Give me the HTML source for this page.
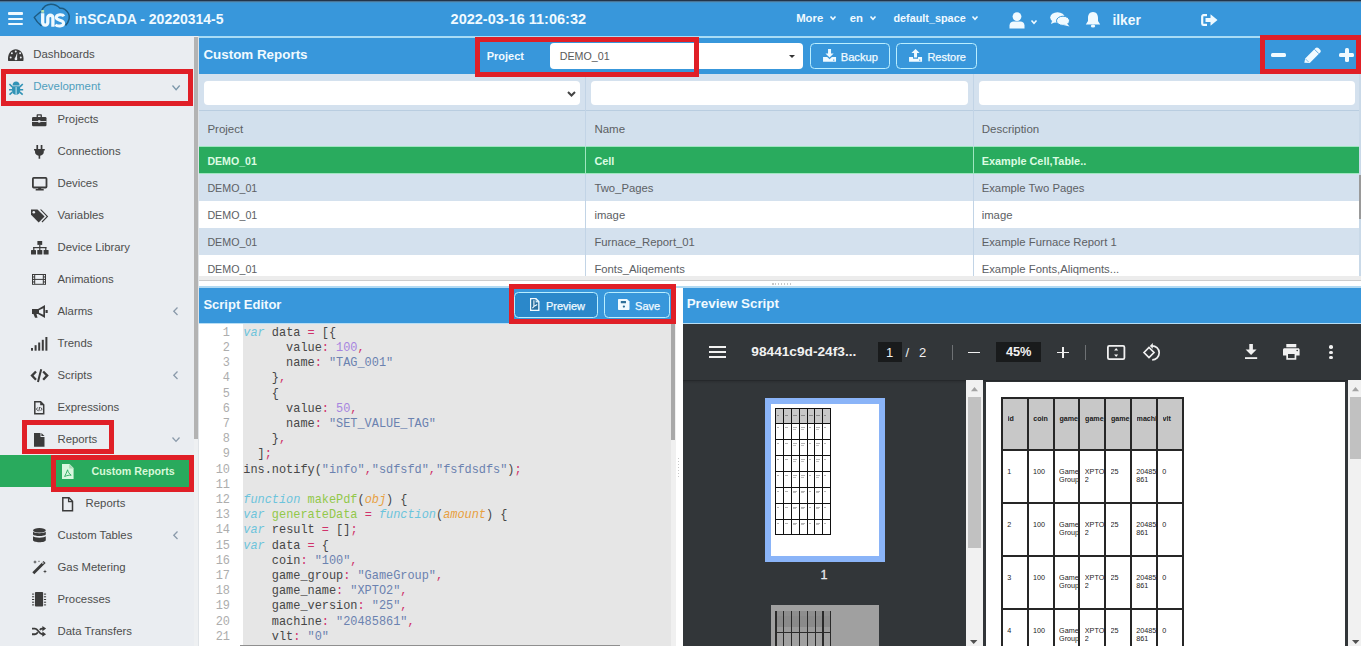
<!DOCTYPE html>
<html><head><meta charset="utf-8">
<style>
*{margin:0;padding:0;box-sizing:border-box}
html,body{width:1361px;height:646px;overflow:hidden;background:#fff}
body{font-family:"Liberation Sans",sans-serif;position:relative}
.a{position:absolute}
.t{position:absolute;white-space:nowrap;line-height:1}
.rb{position:absolute;border:5px solid #e01f27}
svg{position:absolute;overflow:visible}
.cm{font-family:"Liberation Mono",monospace;font-size:11.9px;line-height:15.2px;white-space:pre;position:absolute;color:#474747}
.k{color:#6cc4dc;font-style:italic}
.p{color:#d0336b}
.n{color:#a685e0}
.s{color:#6b82b0}
.f{color:#92c84a}
.o{color:#e8a040;font-style:italic}
</style></head><body>
<div class="a" style="left:0px;top:0px;width:1361px;height:36px;background:#3897db;"></div><div class="a" style="left:0px;top:0px;width:1361px;height:1.2px;background:#22344a;"></div><div class="a" style="left:0px;top:1.2px;width:1361px;height:1px;background:#4a7496;"></div><div class="a" style="left:0px;top:2.2px;width:1361px;height:1.2px;background:#4592c6;"></div><div class="a" style="left:8px;top:12px;width:15px;height:2.8px;background:#f0faff;border-radius:1px"></div><div class="a" style="left:8px;top:17.5px;width:15px;height:2.8px;background:#f0faff;border-radius:1px"></div><div class="a" style="left:8px;top:22.6px;width:15px;height:2.8px;background:#f0faff;border-radius:1px"></div><svg style="left:0px;top:0px" width="80" height="36" viewBox="0 0 80 36">
<path d="M41.5 11 C43.5 6.5 47 4.2 51 4.2 C55 4.2 58 6 60 8.2 C63 7.8 66.5 10 68.5 13.5 C70.5 17.5 68.5 22 65.5 25.5" fill="none" stroke="#1d5a80" stroke-width="1.5"/>
<path d="M41 11.5 C38.5 13.5 35.5 16 34.3 17.5 C35.5 19.8 38.5 23.5 41.5 25.8" fill="none" stroke="#1d5a80" stroke-width="1.5"/>
<path d="M42.7 13.2 V22.6 A2.55 2.55 0 0 0 47.8 22.6 V17.8 A2.55 2.55 0 0 1 52.9 17.8 V26.8" fill="none" stroke="#f0faff" stroke-width="3.3"/>
<path d="M64 16.2 C62.8 14.3 56.3 14 56.3 17.6 C56.3 21 63.6 19.5 63.6 23.3 C63.6 26.8 57 26.6 55.5 24.6" fill="none" stroke="#f0faff" stroke-width="3"/>
<rect x="41.3" y="10" width="2.8" height="2.6" fill="#b5e0b0"/>
</svg><div class="t" style="left:74.7px;top:11.70px;font-size:14px;color:#f0faff;font-weight:bold;">inSCADA - 20220314-5</div><div class="t" style="left:450.6px;top:11.62px;font-size:14.5px;color:#f0faff;font-weight:bold;">2022-03-16 11:06:32</div><div class="t" style="left:796.2px;top:12.50px;font-size:11.3px;color:#f0faff;font-weight:bold;">More</div><div class="t" style="left:849.8px;top:12.50px;font-size:11.3px;color:#f0faff;font-weight:bold;">en</div><div class="t" style="left:893.4px;top:12.57px;font-size:10.85px;color:#f0faff;font-weight:bold;">default_space</div><svg style="left:829.5px;top:15.5px" width="6" height="3.5"><polyline points="0.5,0.5 3.0,3.2 5.5,0.5" fill="none" stroke="#f0faff" stroke-width="1.6"/></svg><svg style="left:869.7px;top:15.5px" width="6" height="3.5"><polyline points="0.5,0.5 3.0,3.2 5.5,0.5" fill="none" stroke="#f0faff" stroke-width="1.6"/></svg><svg style="left:971.5px;top:15.5px" width="6" height="3.5"><polyline points="0.5,0.5 3.0,3.2 5.5,0.5" fill="none" stroke="#f0faff" stroke-width="1.6"/></svg><svg style="left:1008.5px;top:11.5px" width="16" height="17" viewBox="0 0 16 17">
<circle cx="8" cy="4.6" r="4.4" fill="#f0faff"/>
<path d="M0.5 16.5 L0.5 13.5 C0.5 11 2.5 9.5 4.5 9.5 L11.5 9.5 C13.5 9.5 15.5 11 15.5 13.5 L15.5 16.5 Z" fill="#f0faff"/>
</svg><svg style="left:1030.5px;top:19.5px" width="6" height="3.5"><polyline points="0.5,0.5 3.0,3.2 5.5,0.5" fill="none" stroke="#f0faff" stroke-width="1.6"/></svg><svg style="left:1050px;top:12px" width="20" height="15" viewBox="0 0 20 15">
<ellipse cx="7.5" cy="5.5" rx="7.3" ry="5.2" fill="#f0faff"/>
<path d="M2 9 L1 12 L5.5 10 Z" fill="#f0faff"/>
<ellipse cx="13" cy="8.8" rx="6.5" ry="4.6" fill="#f0faff" stroke="#3897db" stroke-width="1"/>
<path d="M17 11.5 L19.5 14.5 L13.5 13 Z" fill="#f0faff"/>
</svg><svg style="left:1084.5px;top:11px" width="16" height="17" viewBox="0 0 16 17">
<path d="M8 1 C4.5 1 3 3.8 3 7 L3 10 L0.8 13.5 L15.2 13.5 L13 10 L13 7 C13 3.8 11.5 1 8 1 Z" fill="#f0faff"/>
<ellipse cx="8" cy="15" rx="2.2" ry="1.6" fill="#f0faff"/>
</svg><div class="t" style="left:1112.4px;top:13.53px;font-size:13.8px;color:#f0faff;font-weight:bold;">ilker</div><svg style="left:1200.5px;top:13.5px" width="17" height="12" viewBox="0 0 17 12">
<path d="M6 1.2 L2.5 1.2 C1.6 1.2 1.2 1.8 1.2 2.6 L1.2 9.4 C1.2 10.2 1.6 10.8 2.5 10.8 L6 10.8" fill="none" stroke="#f0faff" stroke-width="2.2"/>
<path d="M4.5 4 L9.5 4 L9.5 0.3 L16.5 6 L9.5 11.7 L9.5 8 L4.5 8 Z" fill="#f0faff"/>
</svg><div class="a" style="left:0px;top:36px;width:194px;height:610px;background:#eaedf1;"></div><div class="a" style="left:194px;top:36px;width:5px;height:610px;background:#eef0f2;"></div><div class="a" style="left:198px;top:36px;width:1px;height:610px;background:#dfe3e7;"></div><div class="a" style="left:194px;top:37px;width:4px;height:402px;background:#b3b3b3;"></div><svg style="left:7.8px;top:48.6px" width="15.5" height="12.2" viewBox="0 0 16 12.5"><path d="M0.2 12.3 C0 11.5 0 10.5 0 9.5 C0 4.2 3.6 0.2 8 0.2 C12.4 0.2 16 4.2 16 9.5 C16 10.5 16 11.5 15.8 12.3 Z" fill="#3b3b3b"/><circle cx="2.8" cy="8.8" r="1" fill="#eceff3"/><circle cx="4" cy="4.3" r="1" fill="#eceff3"/><circle cx="8" cy="2.6" r="1" fill="#eceff3"/><circle cx="12.5" cy="4.3" r="1" fill="#eceff3"/><circle cx="13.2" cy="8.8" r="1" fill="#eceff3"/><path d="M7 10.2 L9.6 3.5 L9.3 10.4 Z" fill="#eceff3"/><circle cx="8.2" cy="10.2" r="1.4" fill="#eceff3"/></svg><div class="t" style="left:33.3px;top:48.69px;font-size:11.4px;color:#4d4d4d;font-weight:normal;">Dashboards</div><svg style="left:8.6px;top:80.8px" width="14.2" height="14.2" viewBox="0 0 14 14"><path d="M3.5 4.5 C3.5 2 5 0.6 7 0.6 C9 0.6 10.5 2 10.5 4.5 Z" fill="#3193b6"/><path d="M3 5.3 L11 5.3 L11 9.5 C11 12 9.2 13.6 7 13.6 C4.8 13.6 3 12 3 9.5 Z" fill="#3193b6"/><path d="M7 6 L7 13.4" stroke="#dff3fb" stroke-width="0.9"/><path d="M0.4 3 L3.2 5.8 M13.6 3 L10.8 5.8 M0 8.6 L3.2 8.6 M14 8.6 L10.8 8.6 M0.5 13.5 L3.3 11 M13.5 13.5 L10.7 11" stroke="#3193b6" stroke-width="1.6"/></svg><div class="t" style="left:33.3px;top:81.39px;font-size:11.4px;color:#509fbd;font-weight:normal;">Development</div><svg style="left:171.5px;top:84.8px" width="8.2" height="5"><polyline points="0.5,0.5 4.1,4.7 7.699999999999999,0.5" fill="none" stroke="#7b97aa" stroke-width="1.3"/></svg><svg style="left:32px;top:113.8px" width="14.5" height="12.2" viewBox="0 0 14.5 12.2"><path d="M4.6 3 L4.6 1.2 C4.6 0.5 5 0.2 5.6 0.2 L8.9 0.2 C9.5 0.2 9.9 0.5 9.9 1.2 L9.9 3 L8.6 3 L8.6 1.4 L5.9 1.4 L5.9 3 Z" fill="#3b3b3b"/><rect x="0" y="3" width="14.5" height="9.2" rx="1.2" fill="#3b3b3b"/><rect x="0" y="7" width="14.5" height="0.9" fill="#eceff3"/><rect x="6.2" y="6.2" width="2.1" height="2.4" fill="#eceff3"/></svg><div class="t" style="left:57.5px;top:114.10px;font-size:11.35px;color:#4d4d4d;font-weight:normal;">Projects</div><svg style="left:33.8px;top:145px" width="10.8" height="13.8" viewBox="0 0 10.8 13.8"><rect x="2.4" y="0" width="1.7" height="4" fill="#3b3b3b"/><rect x="6.7" y="0" width="1.7" height="4" fill="#3b3b3b"/><path d="M0 4 L10.8 4 L10.8 5.6 L9.8 5.6 L9.8 7 C9.8 9 8 10.5 6.2 10.8 L6.2 13.8 L4.6 13.8 L4.6 10.8 C2.8 10.5 1 9 1 7 L1 5.6 L0 5.6 Z" fill="#3b3b3b"/></svg><div class="t" style="left:57.5px;top:146.10px;font-size:11.35px;color:#4d4d4d;font-weight:normal;">Connections</div><svg style="left:31.7px;top:177px" width="15.4" height="13.6" viewBox="0 0 15.4 13.6"><rect x="0.9" y="0.9" width="13.6" height="9.6" rx="0.8" fill="none" stroke="#3b3b3b" stroke-width="1.8"/><rect x="6.2" y="10.5" width="3" height="2" fill="#3b3b3b"/><rect x="3.6" y="12" width="8.2" height="1.6" rx="0.5" fill="#3b3b3b"/></svg><div class="t" style="left:57.5px;top:178.10px;font-size:11.35px;color:#4d4d4d;font-weight:normal;">Devices</div><svg style="left:30.6px;top:209px" width="17.4" height="14" viewBox="0 0 17.4 14"><path d="M0 0.5 L6.5 0.5 L13.6 7.5 L7.7 13.5 L0 5.8 Z" fill="#3b3b3b"/><circle cx="2.8" cy="3.3" r="1.3" fill="#eceff3"/><path d="M9 0.5 L10.4 0.5 L17.2 7.4 L11.4 13.4 L10.6 12.6 L15.6 7.4 Z" fill="#3b3b3b"/></svg><div class="t" style="left:57.5px;top:210.10px;font-size:11.35px;color:#4d4d4d;font-weight:normal;">Variables</div><svg style="left:30.6px;top:241px" width="17.6" height="13.5" viewBox="0 0 17.6 13.5"><rect x="6.4" y="0" width="4.8" height="3.9" fill="#3b3b3b"/><rect x="8.2" y="3.9" width="1.2" height="2.6" fill="#3b3b3b"/><rect x="2.2" y="6" width="13.2" height="1.2" fill="#3b3b3b"/><rect x="2.2" y="6" width="1.2" height="3" fill="#3b3b3b"/><rect x="14.2" y="6" width="1.2" height="3" fill="#3b3b3b"/><rect x="8.2" y="6" width="1.2" height="3" fill="#3b3b3b"/><rect x="0" y="9" width="5" height="4.5" rx="0.6" fill="#3b3b3b"/><rect x="6.3" y="9" width="5" height="4.5" rx="0.6" fill="#3b3b3b"/><rect x="12.6" y="9" width="5" height="4.5" rx="0.6" fill="#3b3b3b"/></svg><div class="t" style="left:57.5px;top:242.10px;font-size:11.35px;color:#4d4d4d;font-weight:normal;">Device Library</div><svg style="left:32.4px;top:274px" width="14" height="10.8" viewBox="0 0 14 10.8"><rect x="0" y="0" width="14" height="10.8" fill="#3b3b3b"/><rect x="3.2" y="1" width="7.6" height="3.9" fill="#eceff3"/><rect x="3.2" y="5.9" width="7.6" height="3.9" fill="#eceff3"/><rect x="1" y="1" width="1.2" height="1.4" fill="#eceff3"/><rect x="1" y="3.5" width="1.2" height="1.4" fill="#eceff3"/><rect x="1" y="6" width="1.2" height="1.4" fill="#eceff3"/><rect x="1" y="8.5" width="1.2" height="1.4" fill="#eceff3"/><rect x="11.8" y="1" width="1.2" height="1.4" fill="#eceff3"/><rect x="11.8" y="3.5" width="1.2" height="1.4" fill="#eceff3"/><rect x="11.8" y="6" width="1.2" height="1.4" fill="#eceff3"/><rect x="11.8" y="8.5" width="1.2" height="1.4" fill="#eceff3"/></svg><div class="t" style="left:57.5px;top:274.10px;font-size:11.35px;color:#4d4d4d;font-weight:normal;">Animations</div><svg style="left:32px;top:304.6px" width="15.7" height="13" viewBox="0 0 15.7 13"><path d="M0 4 L6 4 L13 0 L13 13 L6 9 L0 9 Z" fill="#3b3b3b"/><path d="M11.3 3.3 L11.3 9.7 L7 7.7 L7 5.3 Z" fill="#eceff3"/><rect x="13.5" y="5" width="2.2" height="3" fill="#3b3b3b"/><path d="M1.5 9 L4.5 9 L5.5 12.8 L3 12.8 Z" fill="#3b3b3b"/></svg><div class="t" style="left:57.5px;top:306.10px;font-size:11.35px;color:#4d4d4d;font-weight:normal;">Alarms</div><svg style="left:173px;top:307.3px" width="5" height="8.5"><polyline points="4.5,0.5 0.8,4.25 4.5,8" fill="none" stroke="#8a9aaa" stroke-width="1.3"/></svg><svg style="left:31px;top:336.8px" width="16.7" height="13.7" viewBox="0 0 16.7 13.7"><rect x="0" y="11" width="2" height="2.7" fill="#3b3b3b"/><rect x="3.6" y="8.2" width="2" height="5.5" fill="#3b3b3b"/><rect x="7.2" y="5.5" width="2" height="8.2" fill="#3b3b3b"/><rect x="10.8" y="2.8" width="2" height="10.9" fill="#3b3b3b"/><rect x="14.4" y="0" width="2" height="13.7" fill="#3b3b3b"/></svg><div class="t" style="left:57.5px;top:338.10px;font-size:11.35px;color:#4d4d4d;font-weight:normal;">Trends</div><svg style="left:30.8px;top:369px" width="17.2" height="13.3" viewBox="0 0 17.2 13.3"><path d="M5 2.5 L1 6.6 L5 10.7" fill="none" stroke="#3b3b3b" stroke-width="2.3"/><path d="M12.2 2.5 L16.2 6.6 L12.2 10.7" fill="none" stroke="#3b3b3b" stroke-width="2.3"/><path d="M10.2 0.3 L7 13" stroke="#3b3b3b" stroke-width="2"/></svg><div class="t" style="left:57.5px;top:370.10px;font-size:11.35px;color:#4d4d4d;font-weight:normal;">Scripts</div><svg style="left:173px;top:371.3px" width="5" height="8.5"><polyline points="4.5,0.5 0.8,4.25 4.5,8" fill="none" stroke="#8a9aaa" stroke-width="1.3"/></svg><svg style="left:34px;top:400.7px" width="10.5" height="13.6" viewBox="0 0 10.5 13.6"><path d="M0.8 0.8 L6.6 0.8 L9.7 3.9 L9.7 12.8 L0.8 12.8 Z" fill="none" stroke="#3b3b3b" stroke-width="1.5"/><path d="M6.2 0.5 L6.2 4.3 L10 4.3" fill="#3b3b3b"/><path d="M3.8 6.4 L2.4 8.1 L3.8 9.8 M6.7 6.4 L8.1 8.1 L6.7 9.8 M5.7 6 L4.8 10.2" fill="none" stroke="#3b3b3b" stroke-width="0.9"/></svg><div class="t" style="left:57.5px;top:402.10px;font-size:11.35px;color:#4d4d4d;font-weight:normal;">Expressions</div><svg style="left:34px;top:432.7px" width="10.5" height="13.7" viewBox="0 0 10.5 13.7"><path d="M0 0 L6.5 0 L6.5 4 L10.5 4 L10.5 13.7 L0 13.7 Z" fill="#3b3b3b"/><path d="M7.4 0 L10.5 3.1 L7.4 3.1 Z" fill="#3b3b3b"/></svg><div class="t" style="left:57.5px;top:434.10px;font-size:11.35px;color:#4d4d4d;font-weight:normal;">Reports</div><svg style="left:171.6px;top:436.8px" width="8" height="4.7"><polyline points="0.5,0.5 4.0,4.4 7.5,0.5" fill="none" stroke="#8a9aaa" stroke-width="1.3"/></svg><svg style="left:33.2px;top:528.2px" width="12.8" height="14.2" viewBox="0 0 12.8 14.2"><ellipse cx="6.4" cy="2.3" rx="6.4" ry="2.3" fill="#3b3b3b"/><path d="M0 3.8 C1 5.6 11.8 5.6 12.8 3.8 L12.8 6.6 C11.8 8.6 1 8.6 0 6.6 Z" fill="#3b3b3b"/><path d="M0 8.3 C1 10.1 11.8 10.1 12.8 8.3 L12.8 11.9 C12.8 13.2 10 14.2 6.4 14.2 C2.8 14.2 0 13.2 0 11.9 Z" fill="#3b3b3b"/></svg><div class="t" style="left:57.5px;top:530.10px;font-size:11.35px;color:#4d4d4d;font-weight:normal;">Custom Tables</div><svg style="left:173px;top:531.3px" width="5" height="8.5"><polyline points="4.5,0.5 0.8,4.25 4.5,8" fill="none" stroke="#8a9aaa" stroke-width="1.3"/></svg><svg style="left:31.8px;top:560px" width="15" height="14.6" viewBox="0 0 15 14.6"><path d="M0.3 12.3 L11.6 1 L13.6 3 L2.3 14.3 Z" fill="#3b3b3b"/><rect x="10.2" y="2.2" width="1.4" height="1.4" transform="rotate(45 10.9 2.9)" fill="#eceff3"/><path d="M3 0 L3.5 1.5 L5 2 L3.5 2.5 L3 4 L2.5 2.5 L1 2 L2.5 1.5 Z M13 9.5 L13.5 11 L15 11.5 L13.5 12 L13 13.5 L12.5 12 L11 11.5 L12.5 11 Z M7 0.3 L7.3 1 L8 1.3 L7.3 1.6 L7 2.3 L6.7 1.6 L6 1.3 L6.7 1 Z" fill="#3b3b3b"/></svg><div class="t" style="left:57.5px;top:562.10px;font-size:11.35px;color:#4d4d4d;font-weight:normal;">Gas Metering</div><svg style="left:32.4px;top:592.2px" width="14.1" height="14.6" viewBox="0 0 14.1 14.6"><rect x="3" y="0" width="8.1" height="14.6" rx="0.8" fill="#3b3b3b"/><rect x="0" y="1.6" width="2.2" height="1" fill="#3b3b3b"/><rect x="11.9" y="1.6" width="2.2" height="1" fill="#3b3b3b"/><rect x="0" y="4.3" width="2.2" height="1" fill="#3b3b3b"/><rect x="11.9" y="4.3" width="2.2" height="1" fill="#3b3b3b"/><rect x="0" y="7" width="2.2" height="1" fill="#3b3b3b"/><rect x="11.9" y="7" width="2.2" height="1" fill="#3b3b3b"/><rect x="0" y="9.7" width="2.2" height="1" fill="#3b3b3b"/><rect x="11.9" y="9.7" width="2.2" height="1" fill="#3b3b3b"/><rect x="0" y="12.4" width="2.2" height="1" fill="#3b3b3b"/><rect x="11.9" y="12.4" width="2.2" height="1" fill="#3b3b3b"/></svg><div class="t" style="left:57.5px;top:594.10px;font-size:11.35px;color:#4d4d4d;font-weight:normal;">Processes</div><svg style="left:32.4px;top:626.3px" width="14.1" height="10.8" viewBox="0 0 14.1 10.8"><path d="M0 2.6 L3 2.6 C6 2.6 7 8.2 10.3 8.2 L11 8.2" fill="none" stroke="#3b3b3b" stroke-width="1.9"/><path d="M0 8.2 L3 8.2 C4.3 8.2 5.2 7.2 5.8 6.2 M7.8 3.8 C8.4 3.2 9.2 2.6 10.3 2.6 L11 2.6" fill="none" stroke="#3b3b3b" stroke-width="1.9"/><path d="M10.4 0 L14.1 2.6 L10.4 5.2 Z M10.4 5.6 L14.1 8.2 L10.4 10.8 Z" fill="#3b3b3b"/></svg><div class="t" style="left:57.5px;top:626.10px;font-size:11.35px;color:#4d4d4d;font-weight:normal;">Data Transfers</div><div class="a" style="left:0px;top:455px;width:194px;height:32px;background:#29aa5d;"></div><svg style="left:61.6px;top:464.4px" width="11.6" height="14.9" viewBox="0 0 11.6 14.9"><path d="M0 0 L7.6 0 L11.6 4 L11.6 14.9 L0 14.9 Z" fill="#d9f7df"/><path d="M7.2 0 L7.2 4.4 L11.6 4.4" fill="#a8dcb6"/><path d="M2.6 12.5 C3.5 10.5 5 8 5.6 5.8 C5.9 7.8 7.3 10 9.2 11.2 C7.3 11 5 11.5 2.6 12.5 Z" fill="none" stroke="#29aa5d" stroke-width="0.9"/></svg><div class="t" style="left:91.6px;top:466.39px;font-size:10.7px;color:#d8f8d8;font-weight:bold;">Custom Reports</div><svg style="left:61.6px;top:496.5px" width="11.3" height="14.6" viewBox="0 0 11.3 14.6"><path d="M0.8 0.8 L7 0.8 L10.5 4.3 L10.5 13.8 L0.8 13.8 Z" fill="none" stroke="#3b3b3b" stroke-width="1.5"/><path d="M6.6 0.8 L6.6 4.7 L10.5 4.7" fill="none" stroke="#3b3b3b" stroke-width="1.3"/></svg><div class="t" style="left:85.6px;top:498.10px;font-size:11.35px;color:#4d4d4d;font-weight:normal;">Reports</div><div class="a" style="left:199px;top:36px;width:1162px;height:2.2px;background:#a9dcf5;"></div><div class="a" style="left:199px;top:38px;width:1162px;height:36px;background:#3897db;"></div><div class="t" style="left:203.4px;top:48.09px;font-size:13.4px;color:#f0faff;font-weight:bold;">Custom Reports</div><div class="t" style="left:486.7px;top:50.95px;font-size:11px;color:#f0faff;font-weight:bold;">Project</div><div class="a" style="left:550.2px;top:43.3px;width:252.4px;height:25.4px;background:#fff;border-radius:4px"></div><div class="t" style="left:559.7px;top:50.70px;font-size:10.7px;color:#5a5a5a;font-weight:normal;">DEMO_01</div><svg style="left:789px;top:55px" width="6" height="3"><polygon points="0,0 6,0 3,3" fill="#333"/></svg><div class="a" style="left:810px;top:43px;width:80px;height:25.700000000000003px;background:#3897db;border:1.3px solid #b9eeff;border-radius:4.5px"></div><div class="a" style="left:896px;top:43px;width:81px;height:25.700000000000003px;background:#3897db;border:1.3px solid #b9eeff;border-radius:4.5px"></div><svg style="left:822.9px;top:49.2px" width="13.1" height="12.8" viewBox="0 0 13 12.8"><path d="M5 0 L8 0 L8 4.5 L10.6 4.5 L6.5 8.6 L2.4 4.5 L5 4.5 Z" fill="#f0faff"/><path d="M0 8 L4.2 8 L6.5 10.2 L8.8 8 L13 8 L13 12.8 L0 12.8 Z" fill="#f0faff"/><rect x="10" y="10.6" width="1.3" height="1" fill="#3897db"/></svg><div class="t" style="left:840.7px;top:51.52px;font-size:11.2px;color:#f0faff;font-weight:normal;-webkit-text-stroke:0.25px #f0faff">Backup</div><svg style="left:908.8px;top:49.2px" width="13.1" height="12.8" viewBox="0 0 13 12.8"><path d="M6.5 0 L10.6 4.1 L8 4.1 L8 8.6 L5 8.6 L5 4.1 L2.4 4.1 Z" fill="#f0faff"/><path d="M0 8 L4 8 L4 9.8 L9 9.8 L9 8 L13 8 L13 12.8 L0 12.8 Z" fill="#f0faff"/><rect x="10" y="10.6" width="1.3" height="1" fill="#3897db"/></svg><div class="t" style="left:927.4px;top:51.55px;font-size:11px;color:#f0faff;font-weight:normal;-webkit-text-stroke:0.25px #f0faff">Restore</div><div class="a" style="left:1271.4px;top:53px;width:15px;height:4px;background:#f0faff;border-radius:1.5px"></div><svg style="left:1304.2px;top:47px" width="17.2" height="16" viewBox="0 0 17.2 16"><path d="M0.3 15.7 L1.2 11.4 L11.6 1 C12.4 0.2 13.6 0.2 14.4 1 L16.2 2.8 C17 3.6 17 4.8 16.2 5.6 L5.8 16 Z" fill="#f0faff"/><path d="M10.5 2.3 L14.9 6.7" stroke="#3897db" stroke-width="0.8"/><path d="M1.6 12 L4.8 15.2" stroke="#3897db" stroke-width="0.6"/></svg><div class="a" style="left:1338.9px;top:53px;width:15px;height:4px;background:#f0faff;border-radius:1.5px"></div><div class="a" style="left:1344.5px;top:48px;width:4px;height:14px;background:#f0faff;border-radius:1.5px"></div><div class="a" style="left:199px;top:74px;width:1162px;height:36.5px;background:#d4e1ee;"></div><div class="a" style="left:204px;top:81px;width:376px;height:24.2px;background:#fff;border-radius:4px"></div><div class="a" style="left:591px;top:81px;width:377px;height:24.2px;background:#fff;border-radius:4px"></div><div class="a" style="left:979px;top:81px;width:376px;height:24.2px;background:#fff;border-radius:4px"></div><svg style="left:566.5px;top:90.5px" width="9" height="5.5"><polyline points="1,1 4.5,4.5 8,1" fill="none" stroke="#444" stroke-width="2"/></svg><div class="a" style="left:199px;top:110px;width:1162px;height:1px;background:#b9cde0;"></div><div class="a" style="left:199px;top:111px;width:1160px;height:35.5px;background:#d2e0ed;"></div><div class="t" style="left:207.4px;top:123.68px;font-size:11.5px;color:#5c6064;font-weight:normal;">Project</div><div class="t" style="left:594.4px;top:123.68px;font-size:11.5px;color:#5c6064;font-weight:normal;">Name</div><div class="t" style="left:981.7px;top:123.68px;font-size:11.5px;color:#5c6064;font-weight:normal;">Description</div><div class="a" style="left:199px;top:146.5px;width:1160px;height:27px;background:#29ab5e;"></div><div class="a" style="left:199px;top:146.0px;width:1160px;height:1px;background:#9fe6c0;"></div><div class="a" style="left:199px;top:172.8px;width:1160px;height:1px;background:#9fe6c0;"></div><div class="t" style="left:207.4px;top:155.61px;font-size:10.6px;color:#dcfbe2;font-weight:bold;">DEMO_01</div><div class="t" style="left:594.4px;top:155.56px;font-size:10.9px;color:#dcfbe2;font-weight:bold;">Cell</div><div class="t" style="left:981.7px;top:155.56px;font-size:10.9px;color:#dcfbe2;font-weight:bold;">Example Cell,Table..</div><div class="a" style="left:199px;top:173.5px;width:1160px;height:27px;background:#d4e1ee;"></div><div class="t" style="left:207.4px;top:182.59px;font-size:10.7px;color:#5c6064;font-weight:normal;">DEMO_01</div><div class="t" style="left:594.4px;top:182.50px;font-size:11.3px;color:#5c6064;font-weight:normal;">Two_Pages</div><div class="t" style="left:981.7px;top:182.50px;font-size:11.3px;color:#5c6064;font-weight:normal;">Example Two Pages</div><div class="a" style="left:199px;top:200.5px;width:1160px;height:27px;background:#ffffff;"></div><div class="t" style="left:207.4px;top:209.59px;font-size:10.7px;color:#5c6064;font-weight:normal;">DEMO_01</div><div class="t" style="left:594.4px;top:209.50px;font-size:11.3px;color:#5c6064;font-weight:normal;">image</div><div class="t" style="left:981.7px;top:209.50px;font-size:11.3px;color:#5c6064;font-weight:normal;">image</div><div class="a" style="left:199px;top:227.5px;width:1160px;height:27px;background:#d4e1ee;"></div><div class="t" style="left:207.4px;top:236.59px;font-size:10.7px;color:#5c6064;font-weight:normal;">DEMO_01</div><div class="t" style="left:594.4px;top:236.50px;font-size:11.3px;color:#5c6064;font-weight:normal;">Furnace_Report_01</div><div class="t" style="left:981.7px;top:236.50px;font-size:11.3px;color:#5c6064;font-weight:normal;">Example Furnace Report 1</div><div class="a" style="left:199px;top:254.5px;width:1160px;height:27px;background:#ffffff;"></div><div class="t" style="left:207.4px;top:263.59px;font-size:10.7px;color:#5c6064;font-weight:normal;">DEMO_01</div><div class="t" style="left:594.4px;top:263.50px;font-size:11.3px;color:#5c6064;font-weight:normal;">Fonts_Aliqements</div><div class="t" style="left:981.7px;top:263.50px;font-size:11.3px;color:#5c6064;font-weight:normal;">Example Fonts,Aliqments...</div><div class="a" style="left:585px;top:74px;width:1px;height:202px;background:#c2d4e6;"></div><div class="a" style="left:973px;top:74px;width:1px;height:202px;background:#c2d4e6;"></div><div class="a" style="left:585px;top:146.5px;width:1px;height:27px;background:#9fe6c0;"></div><div class="a" style="left:973px;top:146.5px;width:1px;height:27px;background:#9fe6c0;"></div><div class="a" style="left:1359px;top:74px;width:2px;height:202px;background:#c9d9e8;"></div><div class="a" style="left:1359.4px;top:175px;width:1.6px;height:44px;background:#9a9a9a;"></div><div class="a" style="left:199px;top:276px;width:1162px;height:4.2px;background:#ececec;"></div><div class="a" style="left:199px;top:280px;width:1162px;height:1px;background:#cdcdcd;"></div><div class="a" style="left:199px;top:281px;width:1162px;height:5.3px;background:#ffffff;"></div><div class="a" style="left:772px;top:282.5px;width:19px;height:2px;background-image:repeating-linear-gradient(90deg,#c8c8c8 0 1.5px,transparent 1.5px 3px)"></div><div class="a" style="left:199px;top:286.3px;width:1162px;height:1.8px;background:#b3daf2;"></div><div class="a" style="left:199px;top:288px;width:477px;height:34.7px;background:#3897db;"></div><div class="t" style="left:203.4px;top:297.65px;font-size:13px;color:#f0faff;font-weight:bold;">Script Editor</div><div class="a" style="left:514.3px;top:292.2px;width:83.5px;height:25.80000000000001px;background:#2b88ca;border:1.3px solid #b9eeff;border-radius:4.5px"></div><div class="a" style="left:604px;top:292.2px;width:66.20000000000005px;height:25.80000000000001px;background:#3897db;border:1.3px solid #b9eeff;border-radius:4.5px"></div><svg style="left:530px;top:298px" width="9.5" height="12.9" viewBox="0 0 9.5 12.9"><path d="M0.7 0.7 L6 0.7 L8.8 3.5 L8.8 12.2 L0.7 12.2 Z" fill="none" stroke="#f0faff" stroke-width="1.4"/><path d="M5.7 0.7 L5.7 3.9 L8.8 3.9" fill="none" stroke="#f0faff" stroke-width="1.2"/><rect x="1.4" y="1.4" width="4.3" height="10.1" fill="#2a6e9c"/><rect x="5.7" y="4.6" width="2.4" height="6.9" fill="#2a6e9c"/><path d="M3.9 2.2 L3.9 8.6 L2.4 10.2 M3.9 8.6 C5 7.8 6 7 7.2 6.4" fill="none" stroke="#f0faff" stroke-width="1.1"/></svg><div class="t" style="left:545.9px;top:300.85px;font-size:11px;color:#f0faff;font-weight:normal;-webkit-text-stroke:0.25px #f0faff">Preview</div><svg style="left:618.2px;top:299.3px" width="11.5" height="11" viewBox="0 0 11.5 11"><path d="M0 1 C0 0.4 0.4 0 1 0 L9 0 L11.5 2.5 L11.5 10 C11.5 10.6 11.1 11 10.5 11 L1 11 C0.4 11 0 10.6 0 10 Z" fill="#f0faff"/><rect x="2.8" y="1.9" width="5.2" height="2.4" rx="0.4" fill="#2f6f98"/><circle cx="5.9" cy="7.6" r="1.15" fill="#2f6f98"/></svg><div class="t" style="left:635.1px;top:300.85px;font-size:11px;color:#f0faff;font-weight:normal;-webkit-text-stroke:0.25px #f0faff">Save</div><div class="a" style="left:199px;top:322.7px;width:477px;height:1.5px;background:#b7def5;"></div><div class="a" style="left:199px;top:324.2px;width:44px;height:322px;background:#ffffff;"></div><div class="a" style="left:243px;top:324.2px;width:428px;height:322px;background:#e6e6e6;"></div><div class="a" style="left:671px;top:324.2px;width:4.5px;height:322px;background:#f0f0f0;"></div><div class="a" style="left:671px;top:324.2px;width:4px;height:116px;background:#a9a9a9;"></div><div class="a" style="left:239.6px;top:644.6px;width:380px;height:1.4px;background:#8f8f8f;"></div><div class="cm" style="left:199px;top:325.7px;width:31px;text-align:right;color:#adadad">1
2
3
4
5
6
7
8
9
10
11
12
13
14
15
16
17
18
19
20
21</div><div class="cm" style="left:243.3px;top:325.7px"><span class="k">var</span> data <span class="p">=</span> [{
      value<span class="p">:</span> <span class="n">100</span><span class="p">,</span>
      name<span class="p">:</span> <span class="s">"TAG_001"</span>
    }<span class="p">,</span>
    {
      value<span class="p">:</span> <span class="n">50</span><span class="p">,</span>
      name<span class="p">:</span> <span class="s">"SET_VALUE_TAG"</span>
    }<span class="p">,</span>
  ]<span class="p">;</span>
ins.notify(<span class="s">"info"</span><span class="p">,</span><span class="s">"sdfsfd"</span><span class="p">,</span><span class="s">"fsfdsdfs"</span>)<span class="p">;</span>

<span class="k">function</span> <span class="f">makePdf</span>(<span class="o">obj</span>) {
<span class="k">var</span> <span class="f">generateData</span> <span class="p">=</span> <span class="k">function</span>(<span class="o">amount</span>) {
<span class="k">var</span> result <span class="p">=</span> []<span class="p">;</span>
<span class="k">var</span> data <span class="p">=</span> {
    coin<span class="p">:</span> <span class="s">"100"</span><span class="p">,</span>
    game_group<span class="p">:</span> <span class="s">"GameGroup"</span><span class="p">,</span>
    game_name<span class="p">:</span> <span class="s">"XPTO2"</span><span class="p">,</span>
    game_version<span class="p">:</span> <span class="s">"25"</span><span class="p">,</span>
    machine<span class="p">:</span> <span class="s">"20485861"</span><span class="p">,</span>
    vlt<span class="p">:</span> <span class="s">"0"</span></div><div class="a" style="left:676px;top:288px;width:7px;height:358px;background:#ffffff;"></div><div class="a" style="left:683px;top:288px;width:678px;height:34.7px;background:#3897db;"></div><div class="t" style="left:686.7px;top:297.39px;font-size:13.4px;color:#f0faff;font-weight:bold;">Preview Script</div><div class="a" style="left:683px;top:322.7px;width:678px;height:1.5px;background:#b7def5;"></div><div class="a" style="left:683px;top:324.2px;width:678px;height:322px;background:#323639;"></div><div class="a" style="left:708.5px;top:346px;width:17px;height:1.8px;background:#f1f1f1;"></div><div class="a" style="left:708.5px;top:351.2px;width:17px;height:1.8px;background:#f1f1f1;"></div><div class="a" style="left:708.5px;top:356.4px;width:17px;height:1.8px;background:#f1f1f1;"></div><div class="t" style="left:751.3px;top:345.34px;font-size:13.7px;color:#f1f1f1;font-weight:bold;">98441c9d-24f3...</div><div class="a" style="left:877.8px;top:341.7px;width:24.2px;height:20.2px;background:#191b1c;"></div><div class="t" style="left:886px;top:346.35px;font-size:13px;color:#f1f1f1;font-weight:normal;">1</div><div class="t" style="left:905.5px;top:346.35px;font-size:13px;color:#f1f1f1;font-weight:normal;">/</div><div class="t" style="left:918.9px;top:346.35px;font-size:13px;color:#f1f1f1;font-weight:normal;">2</div><div class="a" style="left:951.5px;top:344.8px;width:1px;height:15px;background:#6e7174;"></div><div class="a" style="left:967.7px;top:351.5px;width:12.4px;height:1.8px;background:#f1f1f1;"></div><div class="a" style="left:995.8px;top:342px;width:45.1px;height:19.6px;background:#191b1c;"></div><div class="t" style="left:1005.9px;top:346.38px;font-size:12.8px;color:#f1f1f1;font-weight:bold;">45%</div><div class="a" style="left:1056.9px;top:351.5px;width:12px;height:1.8px;background:#f1f1f1;"></div><div class="a" style="left:1062px;top:346.7px;width:1.8px;height:11.5px;background:#f1f1f1;"></div><div class="a" style="left:1085.4px;top:344.8px;width:1px;height:15px;background:#6e7174;"></div><svg style="left:1106.6px;top:344.5px" width="18.3" height="15" viewBox="0 0 18.3 15"><rect x="0.9" y="0.9" width="16.5" height="13.2" rx="1.3" fill="none" stroke="#f1f1f1" stroke-width="1.8"/><path d="M9.15 3 L11.2 5.6 L7.1 5.6 Z M9.15 12 L11.2 9.4 L7.1 9.4 Z" fill="#f1f1f1"/></svg><svg style="left:1142.9px;top:342.5px" width="17.1" height="17.5" viewBox="0 0 17.1 17.5"><path d="M1 9.5 L6 4.5 L11 9.5 L6 14.5 Z" fill="none" stroke="#f1f1f1" stroke-width="1.7"/><path d="M8.5 2.8 C12.8 2.5 16.2 5.8 16.2 9.8 C16.2 13.8 13 16.8 9.2 16.8" fill="none" stroke="#f1f1f1" stroke-width="1.7"/><path d="M9.8 0 L9.8 5.8 L6.8 2.9 Z" fill="#f1f1f1"/></svg><svg style="left:1244.8px;top:344.1px" width="12.2" height="15" viewBox="0 0 12.2 15"><path d="M4.3 0 L7.9 0 L7.9 5.5 L11.6 5.5 L6.1 11 L0.6 5.5 L4.3 5.5 Z" fill="#f1f1f1"/><rect x="0" y="13.2" width="12.2" height="1.8" fill="#f1f1f1"/></svg><svg style="left:1282.7px;top:344.1px" width="16.6" height="15.8" viewBox="0 0 16.6 15.8"><rect x="3.3" y="0" width="10" height="3.3" fill="#f1f1f1"/><path d="M1.5 4.2 L15.1 4.2 C16 4.2 16.6 4.8 16.6 5.7 L16.6 11.5 L13.3 11.5 L13.3 15.8 L3.3 15.8 L3.3 11.5 L0 11.5 L0 5.7 C0 4.8 0.6 4.2 1.5 4.2 Z" fill="#f1f1f1"/><rect x="5" y="10" width="6.6" height="4.1" fill="#323639"/><circle cx="14.2" cy="6.5" r="0.8" fill="#323639"/></svg><div class="a" style="left:1329px;top:345.4px;width:3.6px;height:3.6px;border-radius:50%;background:#f1f1f1"></div><div class="a" style="left:1329px;top:350.59999999999997px;width:3.6px;height:3.6px;border-radius:50%;background:#f1f1f1"></div><div class="a" style="left:1329px;top:355.79999999999995px;width:3.6px;height:3.6px;border-radius:50%;background:#f1f1f1"></div><div class="a" style="left:683px;top:379.8px;width:678px;height:1.3px;background:#25282b;"></div><div class="a" style="left:683px;top:381px;width:678px;height:3px;background:linear-gradient(#2c2f32,#323639)"></div><div class="a" style="left:677.5px;top:458px;width:1.2px;height:20px;background-image:repeating-linear-gradient(180deg,#c8c8c8 0 1.2px,transparent 1.2px 3px)"></div><div class="a" style="left:965.8px;top:380.1px;width:17.2px;height:266px;background:#f1f1f1;"></div><div class="a" style="left:968.1px;top:396.8px;width:12.5px;height:151px;background:#c1c1c1;"></div><svg style="left:970.9px;top:386.6px" width="7" height="4.2"><polygon points="0,4.2 7,4.2 3.5,0" fill="#a3a3a3"/></svg><svg style="left:970.4px;top:640px" width="7.4" height="4"><polygon points="0,0 7.4,0 3.7,4" fill="#505050"/></svg><div class="a" style="left:985.7px;top:382px;width:359.3px;height:264px;background:#ffffff;"></div><div class="a" style="left:1348px;top:380px;width:13px;height:266px;background:#f1f1f1;"></div><div class="a" style="left:1349.5px;top:397px;width:11.5px;height:62px;background:#c1c1c1;"></div><svg style="left:1352px;top:387px" width="7" height="4.2"><polygon points="0,4.2 7,4.2 3.5,0" fill="#a3a3a3"/></svg><svg style="left:1352px;top:640px" width="7.4" height="4"><polygon points="0,0 7.4,0 3.7,4" fill="#505050"/></svg><div class="a" style="left:765.3px;top:397.7px;width:119.9px;height:164.5px;background:#8ab4f8;"></div><div class="a" style="left:771.1px;top:403.5px;width:108.3px;height:152.9px;background:#ffffff;"></div><div class="a" style="left:775.5px;top:408.3px;width:55.200000000000045px;height:15.3px;background:#c8c8c8;"></div><div class="a" style="left:775.5px;top:407.8px;width:55.200000000000045px;height:1px;background:#111;"></div><div class="a" style="left:775.5px;top:423.1px;width:55.200000000000045px;height:1px;background:#111;"></div><div class="a" style="left:775.5px;top:439.0px;width:55.200000000000045px;height:1px;background:#111;"></div><div class="a" style="left:775.5px;top:454.90000000000003px;width:55.200000000000045px;height:1px;background:#111;"></div><div class="a" style="left:775.5px;top:470.8px;width:55.200000000000045px;height:1px;background:#111;"></div><div class="a" style="left:775.5px;top:486.70000000000005px;width:55.200000000000045px;height:1px;background:#111;"></div><div class="a" style="left:775.5px;top:502.6px;width:55.200000000000045px;height:1px;background:#111;"></div><div class="a" style="left:775.5px;top:518.5px;width:55.200000000000045px;height:1px;background:#111;"></div><div class="a" style="left:775.5px;top:534.4px;width:55.200000000000045px;height:1px;background:#111;"></div><div class="a" style="left:775.0px;top:408.3px;width:1px;height:126.59999999999997px;background:#111;"></div><div class="a" style="left:782.8857142857142px;top:408.3px;width:1px;height:126.59999999999997px;background:#111;"></div><div class="a" style="left:790.7714285714286px;top:408.3px;width:1px;height:126.59999999999997px;background:#111;"></div><div class="a" style="left:798.6571428571428px;top:408.3px;width:1px;height:126.59999999999997px;background:#111;"></div><div class="a" style="left:806.5428571428572px;top:408.3px;width:1px;height:126.59999999999997px;background:#111;"></div><div class="a" style="left:814.4285714285714px;top:408.3px;width:1px;height:126.59999999999997px;background:#111;"></div><div class="a" style="left:822.3142857142858px;top:408.3px;width:1px;height:126.59999999999997px;background:#111;"></div><div class="a" style="left:830.2px;top:408.3px;width:1px;height:126.59999999999997px;background:#111;"></div><div class="a" style="left:777.0px;top:427.1px;width:1.5px;height:0.8px;background:#b4b4b4;"></div><div class="a" style="left:784.886px;top:427.1px;width:3px;height:0.8px;background:#b4b4b4;"></div><div class="a" style="left:792.772px;top:427.1px;width:4px;height:0.8px;background:#b4b4b4;"></div><div class="a" style="left:792.772px;top:428.8px;width:3px;height:0.8px;background:#c0c0c0;"></div><div class="a" style="left:800.658px;top:427.1px;width:4px;height:0.8px;background:#b4b4b4;"></div><div class="a" style="left:800.658px;top:428.8px;width:3px;height:0.8px;background:#c0c0c0;"></div><div class="a" style="left:808.544px;top:427.1px;width:2px;height:0.8px;background:#b4b4b4;"></div><div class="a" style="left:816.43px;top:427.1px;width:4px;height:0.8px;background:#b4b4b4;"></div><div class="a" style="left:816.43px;top:428.8px;width:3px;height:0.8px;background:#c0c0c0;"></div><div class="a" style="left:824.316px;top:427.1px;width:1.5px;height:0.8px;background:#b4b4b4;"></div><div class="a" style="left:777.0px;top:443.0px;width:1.5px;height:0.8px;background:#b4b4b4;"></div><div class="a" style="left:784.886px;top:443.0px;width:3px;height:0.8px;background:#b4b4b4;"></div><div class="a" style="left:792.772px;top:443.0px;width:4px;height:0.8px;background:#b4b4b4;"></div><div class="a" style="left:792.772px;top:444.7px;width:3px;height:0.8px;background:#c0c0c0;"></div><div class="a" style="left:800.658px;top:443.0px;width:4px;height:0.8px;background:#b4b4b4;"></div><div class="a" style="left:800.658px;top:444.7px;width:3px;height:0.8px;background:#c0c0c0;"></div><div class="a" style="left:808.544px;top:443.0px;width:2px;height:0.8px;background:#b4b4b4;"></div><div class="a" style="left:816.43px;top:443.0px;width:4px;height:0.8px;background:#b4b4b4;"></div><div class="a" style="left:816.43px;top:444.7px;width:3px;height:0.8px;background:#c0c0c0;"></div><div class="a" style="left:824.316px;top:443.0px;width:1.5px;height:0.8px;background:#b4b4b4;"></div><div class="a" style="left:777.0px;top:458.90000000000003px;width:1.5px;height:0.8px;background:#b4b4b4;"></div><div class="a" style="left:784.886px;top:458.90000000000003px;width:3px;height:0.8px;background:#b4b4b4;"></div><div class="a" style="left:792.772px;top:458.90000000000003px;width:4px;height:0.8px;background:#b4b4b4;"></div><div class="a" style="left:792.772px;top:460.6px;width:3px;height:0.8px;background:#c0c0c0;"></div><div class="a" style="left:800.658px;top:458.90000000000003px;width:4px;height:0.8px;background:#b4b4b4;"></div><div class="a" style="left:800.658px;top:460.6px;width:3px;height:0.8px;background:#c0c0c0;"></div><div class="a" style="left:808.544px;top:458.90000000000003px;width:2px;height:0.8px;background:#b4b4b4;"></div><div class="a" style="left:816.43px;top:458.90000000000003px;width:4px;height:0.8px;background:#b4b4b4;"></div><div class="a" style="left:816.43px;top:460.6px;width:3px;height:0.8px;background:#c0c0c0;"></div><div class="a" style="left:824.316px;top:458.90000000000003px;width:1.5px;height:0.8px;background:#b4b4b4;"></div><div class="a" style="left:777.0px;top:474.8px;width:1.5px;height:0.8px;background:#b4b4b4;"></div><div class="a" style="left:784.886px;top:474.8px;width:3px;height:0.8px;background:#b4b4b4;"></div><div class="a" style="left:792.772px;top:474.8px;width:4px;height:0.8px;background:#b4b4b4;"></div><div class="a" style="left:792.772px;top:476.5px;width:3px;height:0.8px;background:#c0c0c0;"></div><div class="a" style="left:800.658px;top:474.8px;width:4px;height:0.8px;background:#b4b4b4;"></div><div class="a" style="left:800.658px;top:476.5px;width:3px;height:0.8px;background:#c0c0c0;"></div><div class="a" style="left:808.544px;top:474.8px;width:2px;height:0.8px;background:#b4b4b4;"></div><div class="a" style="left:816.43px;top:474.8px;width:4px;height:0.8px;background:#b4b4b4;"></div><div class="a" style="left:816.43px;top:476.5px;width:3px;height:0.8px;background:#c0c0c0;"></div><div class="a" style="left:824.316px;top:474.8px;width:1.5px;height:0.8px;background:#b4b4b4;"></div><div class="a" style="left:777.0px;top:490.70000000000005px;width:1.5px;height:0.8px;background:#b4b4b4;"></div><div class="a" style="left:784.886px;top:490.70000000000005px;width:3px;height:0.8px;background:#b4b4b4;"></div><div class="a" style="left:792.772px;top:490.70000000000005px;width:4px;height:0.8px;background:#b4b4b4;"></div><div class="a" style="left:792.772px;top:492.40000000000003px;width:3px;height:0.8px;background:#c0c0c0;"></div><div class="a" style="left:800.658px;top:490.70000000000005px;width:4px;height:0.8px;background:#b4b4b4;"></div><div class="a" style="left:800.658px;top:492.40000000000003px;width:3px;height:0.8px;background:#c0c0c0;"></div><div class="a" style="left:808.544px;top:490.70000000000005px;width:2px;height:0.8px;background:#b4b4b4;"></div><div class="a" style="left:816.43px;top:490.70000000000005px;width:4px;height:0.8px;background:#b4b4b4;"></div><div class="a" style="left:816.43px;top:492.40000000000003px;width:3px;height:0.8px;background:#c0c0c0;"></div><div class="a" style="left:824.316px;top:490.70000000000005px;width:1.5px;height:0.8px;background:#b4b4b4;"></div><div class="a" style="left:777.0px;top:506.6px;width:1.5px;height:0.8px;background:#b4b4b4;"></div><div class="a" style="left:784.886px;top:506.6px;width:3px;height:0.8px;background:#b4b4b4;"></div><div class="a" style="left:792.772px;top:506.6px;width:4px;height:0.8px;background:#b4b4b4;"></div><div class="a" style="left:792.772px;top:508.3px;width:3px;height:0.8px;background:#c0c0c0;"></div><div class="a" style="left:800.658px;top:506.6px;width:4px;height:0.8px;background:#b4b4b4;"></div><div class="a" style="left:800.658px;top:508.3px;width:3px;height:0.8px;background:#c0c0c0;"></div><div class="a" style="left:808.544px;top:506.6px;width:2px;height:0.8px;background:#b4b4b4;"></div><div class="a" style="left:816.43px;top:506.6px;width:4px;height:0.8px;background:#b4b4b4;"></div><div class="a" style="left:816.43px;top:508.3px;width:3px;height:0.8px;background:#c0c0c0;"></div><div class="a" style="left:824.316px;top:506.6px;width:1.5px;height:0.8px;background:#b4b4b4;"></div><div class="a" style="left:777.0px;top:522.5px;width:1.5px;height:0.8px;background:#b4b4b4;"></div><div class="a" style="left:784.886px;top:522.5px;width:3px;height:0.8px;background:#b4b4b4;"></div><div class="a" style="left:792.772px;top:522.5px;width:4px;height:0.8px;background:#b4b4b4;"></div><div class="a" style="left:792.772px;top:524.2px;width:3px;height:0.8px;background:#c0c0c0;"></div><div class="a" style="left:800.658px;top:522.5px;width:4px;height:0.8px;background:#b4b4b4;"></div><div class="a" style="left:800.658px;top:524.2px;width:3px;height:0.8px;background:#c0c0c0;"></div><div class="a" style="left:808.544px;top:522.5px;width:2px;height:0.8px;background:#b4b4b4;"></div><div class="a" style="left:816.43px;top:522.5px;width:4px;height:0.8px;background:#b4b4b4;"></div><div class="a" style="left:816.43px;top:524.2px;width:3px;height:0.8px;background:#c0c0c0;"></div><div class="a" style="left:824.316px;top:522.5px;width:1.5px;height:0.8px;background:#b4b4b4;"></div><div class="a" style="left:777.0px;top:414.5px;width:1.5px;height:0.8px;background:#8a8a8a;"></div><div class="a" style="left:784.886px;top:414.5px;width:3px;height:0.8px;background:#8a8a8a;"></div><div class="a" style="left:792.772px;top:414.5px;width:4px;height:0.8px;background:#8a8a8a;"></div><div class="a" style="left:800.658px;top:414.5px;width:4px;height:0.8px;background:#8a8a8a;"></div><div class="a" style="left:808.544px;top:414.5px;width:4px;height:0.8px;background:#8a8a8a;"></div><div class="a" style="left:816.43px;top:414.5px;width:4px;height:0.8px;background:#8a8a8a;"></div><div class="a" style="left:824.316px;top:414.5px;width:2px;height:0.8px;background:#8a8a8a;"></div><div class="t" style="left:820.6px;top:568.5px;font-size:12.5px;color:#e8eaed;-webkit-text-stroke:0.3px #e8eaed">1</div><div class="a" style="left:771.1px;top:605px;width:107.5px;height:41px;background:#a0a0a0;"></div><div class="a" style="left:776px;top:610.5px;width:54.8px;height:1.2px;background:#2a2a2a;"></div><div class="a" style="left:776px;top:615.5px;width:54.8px;height:1.2px;background:#2a2a2a;"></div><div class="a" style="left:776px;top:626.5px;width:54.8px;height:1.2px;background:#2a2a2a;"></div><div class="a" style="left:776px;top:631.5px;width:54.8px;height:1.2px;background:#2a2a2a;"></div><div class="a" style="left:776px;top:611px;width:54.8px;height:5px;background:#8e8e8e;"></div><div class="a" style="left:776px;top:616px;width:54.8px;height:11px;background:#8a8a8a;"></div><div class="a" style="left:776px;top:627px;width:54.8px;height:5px;background:#9a9a9a;"></div><div class="a" style="left:775.4px;top:611px;width:1.2px;height:35px;background:#2a2a2a;"></div><div class="a" style="left:783.2285714285714px;top:611px;width:1.2px;height:35px;background:#2a2a2a;"></div><div class="a" style="left:791.0571428571428px;top:611px;width:1.2px;height:35px;background:#2a2a2a;"></div><div class="a" style="left:798.8857142857142px;top:611px;width:1.2px;height:35px;background:#2a2a2a;"></div><div class="a" style="left:806.7142857142857px;top:611px;width:1.2px;height:35px;background:#2a2a2a;"></div><div class="a" style="left:814.5428571428571px;top:611px;width:1.2px;height:35px;background:#2a2a2a;"></div><div class="a" style="left:822.3714285714285px;top:611px;width:1.2px;height:35px;background:#2a2a2a;"></div><div class="a" style="left:830.1999999999999px;top:611px;width:1.2px;height:35px;background:#2a2a2a;"></div><div class="a" style="left:1002px;top:398px;width:181px;height:52.4px;background:#c8c8c8;"></div><div class="a" style="left:1001px;top:397px;width:183px;height:2px;background:#262626;"></div><div class="a" style="left:1001px;top:449px;width:183px;height:2px;background:#262626;"></div><div class="a" style="left:1001px;top:502px;width:183px;height:2px;background:#262626;"></div><div class="a" style="left:1001px;top:555px;width:183px;height:2px;background:#262626;"></div><div class="a" style="left:1001px;top:608px;width:183px;height:2px;background:#262626;"></div><div class="a" style="left:1001px;top:397px;width:2px;height:249px;background:#262626;"></div><div class="a" style="left:1027px;top:397px;width:2px;height:249px;background:#262626;"></div><div class="a" style="left:1053px;top:397px;width:2px;height:249px;background:#262626;"></div><div class="a" style="left:1078px;top:397px;width:2px;height:249px;background:#262626;"></div><div class="a" style="left:1104px;top:397px;width:2px;height:249px;background:#262626;"></div><div class="a" style="left:1130px;top:397px;width:2px;height:249px;background:#262626;"></div><div class="a" style="left:1156px;top:397px;width:2px;height:249px;background:#262626;"></div><div class="a" style="left:1182px;top:397px;width:2px;height:249px;background:#262626;"></div><div class="t" style="left:1007.6px;top:415.6px;width:19.09999999999991px;overflow:hidden;font-size:7.1px;font-weight:bold;color:#1a1a1a">id</div><div class="t" style="left:1033.1999999999998px;top:415.6px;width:19.700000000000045px;overflow:hidden;font-size:7.1px;font-weight:bold;color:#1a1a1a">coin</div><div class="t" style="left:1059.3999999999999px;top:415.6px;width:19.200000000000045px;overflow:hidden;font-size:7.1px;font-weight:bold;color:#1a1a1a">game_</div><div class="t" style="left:1085.1px;top:415.6px;width:19.299999999999955px;overflow:hidden;font-size:7.1px;font-weight:bold;color:#1a1a1a">game_</div><div class="t" style="left:1110.8999999999999px;top:415.6px;width:19.200000000000045px;overflow:hidden;font-size:7.1px;font-weight:bold;color:#1a1a1a">game_</div><div class="t" style="left:1136.6px;top:415.6px;width:19.5px;overflow:hidden;font-size:7.1px;font-weight:bold;color:#1a1a1a">machi</div><div class="t" style="left:1162.6px;top:415.6px;width:19.5px;overflow:hidden;font-size:7.1px;font-weight:bold;color:#1a1a1a">vlt</div><div class="t" style="left:1007.3px;top:468.4px;width:19.29999999999991px;overflow:hidden;font-size:7.2px;line-height:8.1px;color:#222">1</div><div class="t" style="left:1032.8999999999999px;top:468.4px;width:19.900000000000045px;overflow:hidden;font-size:7.2px;line-height:8.1px;color:#222">100</div><div class="t" style="left:1059.1px;top:468.4px;width:19.400000000000045px;overflow:hidden;font-size:7.2px;line-height:8.1px;color:#222">Game<br>Group</div><div class="t" style="left:1084.8px;top:468.4px;width:19.499999999999954px;overflow:hidden;font-size:7.2px;line-height:8.1px;color:#222">XPTO<br>2</div><div class="t" style="left:1110.6px;top:468.4px;width:19.400000000000045px;overflow:hidden;font-size:7.2px;line-height:8.1px;color:#222">25</div><div class="t" style="left:1136.3px;top:468.4px;width:19.7px;overflow:hidden;font-size:7.2px;line-height:8.1px;color:#222">20485<br>861</div><div class="t" style="left:1162.3px;top:468.4px;width:19.7px;overflow:hidden;font-size:7.2px;line-height:8.1px;color:#222">0</div><div class="t" style="left:1007.3px;top:521.3px;width:19.29999999999991px;overflow:hidden;font-size:7.2px;line-height:8.1px;color:#222">2</div><div class="t" style="left:1032.8999999999999px;top:521.3px;width:19.900000000000045px;overflow:hidden;font-size:7.2px;line-height:8.1px;color:#222">100</div><div class="t" style="left:1059.1px;top:521.3px;width:19.400000000000045px;overflow:hidden;font-size:7.2px;line-height:8.1px;color:#222">Game<br>Group</div><div class="t" style="left:1084.8px;top:521.3px;width:19.499999999999954px;overflow:hidden;font-size:7.2px;line-height:8.1px;color:#222">XPTO<br>2</div><div class="t" style="left:1110.6px;top:521.3px;width:19.400000000000045px;overflow:hidden;font-size:7.2px;line-height:8.1px;color:#222">25</div><div class="t" style="left:1136.3px;top:521.3px;width:19.7px;overflow:hidden;font-size:7.2px;line-height:8.1px;color:#222">20485<br>861</div><div class="t" style="left:1162.3px;top:521.3px;width:19.7px;overflow:hidden;font-size:7.2px;line-height:8.1px;color:#222">0</div><div class="t" style="left:1007.3px;top:574.1999999999999px;width:19.29999999999991px;overflow:hidden;font-size:7.2px;line-height:8.1px;color:#222">3</div><div class="t" style="left:1032.8999999999999px;top:574.1999999999999px;width:19.900000000000045px;overflow:hidden;font-size:7.2px;line-height:8.1px;color:#222">100</div><div class="t" style="left:1059.1px;top:574.1999999999999px;width:19.400000000000045px;overflow:hidden;font-size:7.2px;line-height:8.1px;color:#222">Game<br>Group</div><div class="t" style="left:1084.8px;top:574.1999999999999px;width:19.499999999999954px;overflow:hidden;font-size:7.2px;line-height:8.1px;color:#222">XPTO<br>2</div><div class="t" style="left:1110.6px;top:574.1999999999999px;width:19.400000000000045px;overflow:hidden;font-size:7.2px;line-height:8.1px;color:#222">25</div><div class="t" style="left:1136.3px;top:574.1999999999999px;width:19.7px;overflow:hidden;font-size:7.2px;line-height:8.1px;color:#222">20485<br>861</div><div class="t" style="left:1162.3px;top:574.1999999999999px;width:19.7px;overflow:hidden;font-size:7.2px;line-height:8.1px;color:#222">0</div><div class="t" style="left:1007.3px;top:627.1px;width:19.29999999999991px;overflow:hidden;font-size:7.2px;line-height:8.1px;color:#222">4</div><div class="t" style="left:1032.8999999999999px;top:627.1px;width:19.900000000000045px;overflow:hidden;font-size:7.2px;line-height:8.1px;color:#222">100</div><div class="t" style="left:1059.1px;top:627.1px;width:19.400000000000045px;overflow:hidden;font-size:7.2px;line-height:8.1px;color:#222">Game<br>Group</div><div class="t" style="left:1084.8px;top:627.1px;width:19.499999999999954px;overflow:hidden;font-size:7.2px;line-height:8.1px;color:#222">XPTO<br>2</div><div class="t" style="left:1110.6px;top:627.1px;width:19.400000000000045px;overflow:hidden;font-size:7.2px;line-height:8.1px;color:#222">25</div><div class="t" style="left:1136.3px;top:627.1px;width:19.7px;overflow:hidden;font-size:7.2px;line-height:8.1px;color:#222">20485<br>861</div><div class="t" style="left:1162.3px;top:627.1px;width:19.7px;overflow:hidden;font-size:7.2px;line-height:8.1px;color:#222">0</div><div class="rb" style="left:22px;top:420px;width:92px;height:34px;border-width:5px"></div><div class="rb" style="left:51px;top:455px;width:143px;height:37px;border-width:5px"></div><div class="rb" style="left:1px;top:69px;width:192px;height:37px;border-width:5px"></div><div class="rb" style="left:475px;top:37px;width:224px;height:40px;border-width:5px"></div><div class="rb" style="left:1260px;top:35px;width:101px;height:39px;border-width:5px"></div><div class="rb" style="left:509px;top:284px;width:167px;height:40px;border-width:5px"></div></body></html>
